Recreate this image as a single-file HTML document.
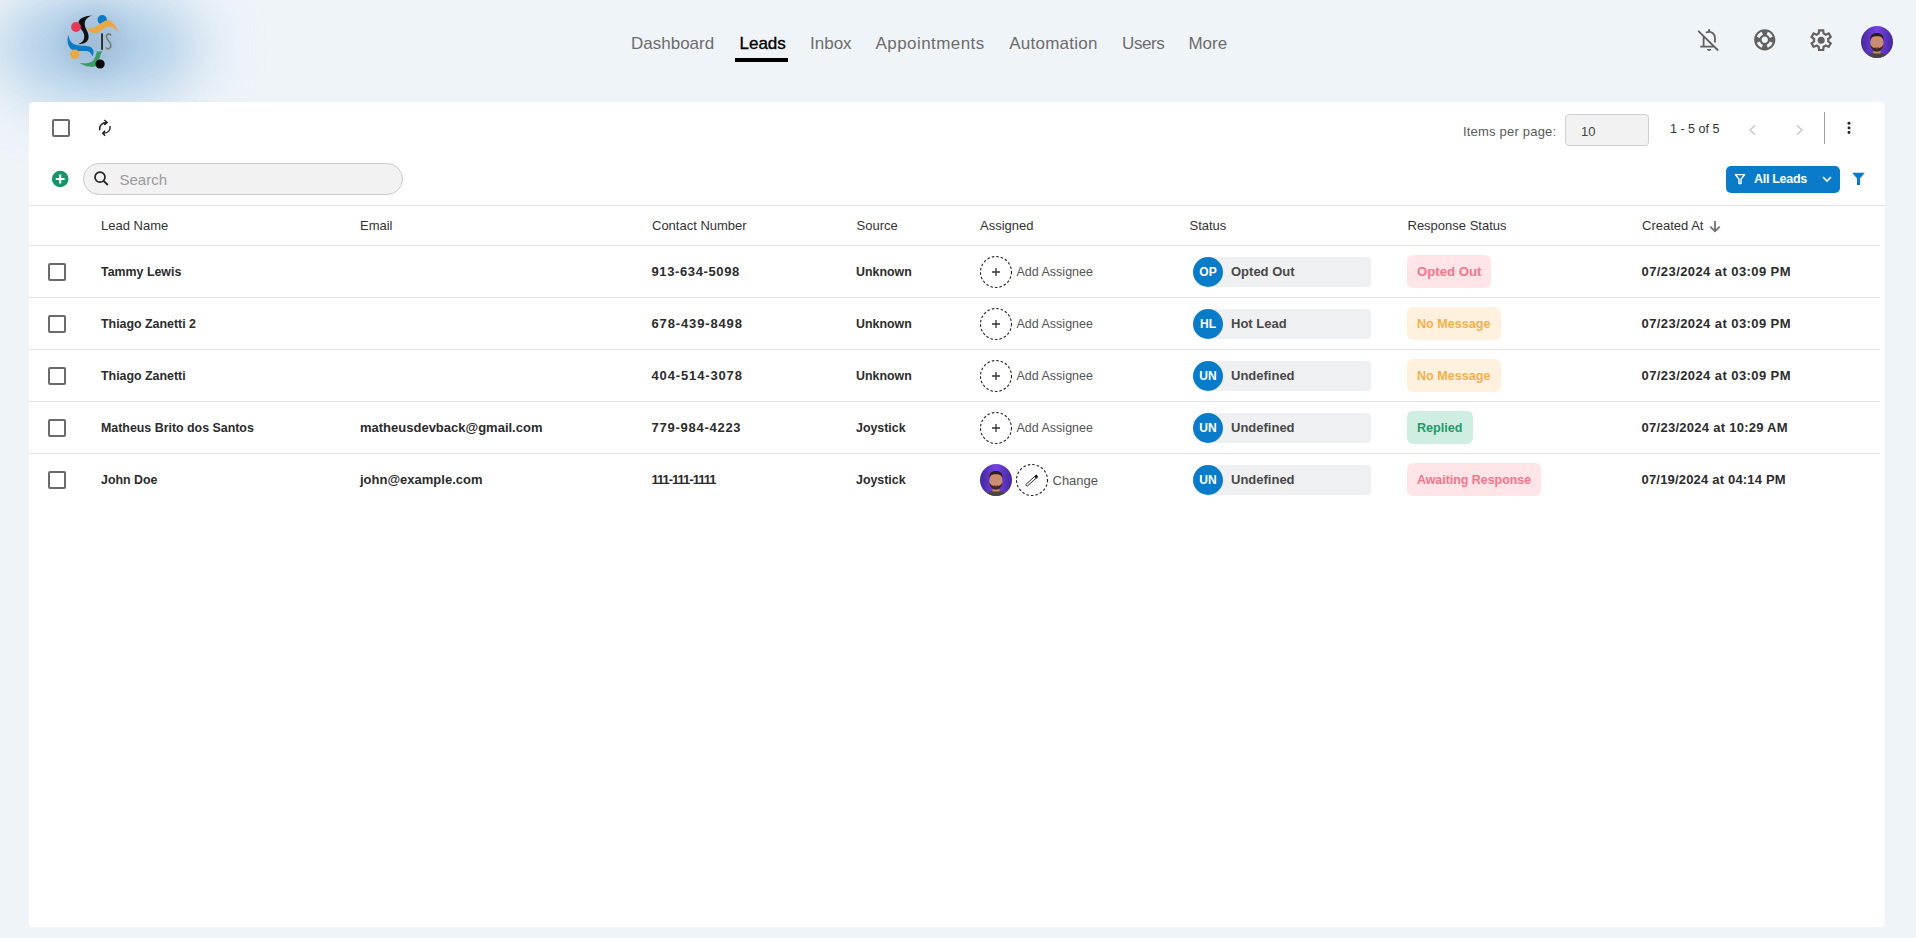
<!DOCTYPE html>
<html><head><meta charset="utf-8">
<style>
*{box-sizing:border-box;margin:0;padding:0}
html,body{width:1916px;height:938px;overflow:hidden}
body{background:#eff4f9;font-family:"Liberation Sans",sans-serif;position:relative;color:#222}
.a{position:absolute;white-space:nowrap}
.glow{position:absolute;left:-4px;top:-8px;width:204px;height:110px;border-radius:50%;background:#abcce7;filter:blur(30px)}
.nav{font-size:17px;line-height:17px;color:#6c6c6c;top:34.6px}
.card{position:absolute;left:29px;top:102px;width:1856px;height:825px;background:#fff;border-radius:4px}
.cb{position:absolute;width:18px;height:18px;border:2px solid #6b6b6b;border-radius:2px}
.hline{position:absolute;height:1px;background:#e2e2e2}
.th{font-size:13px;line-height:13px;color:#333;top:219px}
.td{font-size:13px;line-height:13px;color:#2c2c2c;font-weight:bold}
.dash{position:absolute;width:32px;height:32px;border:1px dashed #333;border-radius:50%}
.stbar{position:absolute;left:1208px;width:163px;height:30px;background:#eff0f2;border-radius:4px}
.stc{position:absolute;left:1193px;width:30px;height:30px;border-radius:50%;background:#0a7bc8;color:#fff;font-weight:bold;font-size:12px;line-height:30px;text-align:center}
.stt{font-size:13px;line-height:13px;color:#484848;font-weight:bold;left:1231px}
.rs{position:absolute;left:1407px;height:33px;border-radius:6px;font-weight:bold;font-size:12.6px;line-height:33px;padding:0 10px}
</style></head><body>
<div class="glow"></div>
<div class="a" style="left:62px;top:12px;width:62px;height:60px;border-radius:50%;background:#9db9d3;opacity:0.75;filter:blur(12px)"></div>

<!-- logo -->
<svg class="a" style="left:55px;top:5px" width="80" height="70" viewBox="55 5 80 70">
 <path d="M92.3 15.4 C86 15.6 80 17.5 78.6 21.5 C78 25 80.5 28.5 82.8 31.5 C84.6 34.2 84.8 38 83.2 40.6 C82 42.4 80 43.6 78.1 44.2 C82.8 44.4 87.5 42.6 88.4 38.8 C89.2 35.2 87.6 31.8 86.1 29 C84.6 26 84.2 22.5 85.6 20 C87 17.6 89.5 16 92.3 15.4 Z" fill="#111"/>
 <circle cx="76" cy="27" r="4.9" fill="#e8395a"/>
 <circle cx="102.2" cy="19.7" r="4.7" fill="#0a7bc8"/>
 <path d="M87 28.2 C90 32 94 35 99 32 C102.5 30 105.5 26.5 109.5 26.5 C113 26.8 116 29.5 118.4 32.2 C116.5 27.5 113.5 21.5 109 20.3 C105 19.6 101.5 23 97.5 25.5 C94 27.8 90.5 28.8 87 28.2 Z" fill="#e9a843"/>
 <path d="M68.4 34.6 C66.8 40 67.2 46 71.5 49.5 C76 52.5 84 50 88.5 51.5 C91 52.5 92 54.5 92 56.6 C94.5 53.5 94 49 90.5 47 C86.5 45 78.5 46.5 73.5 44 C70.3 42.3 68.8 38.5 68.4 34.6 Z" fill="#0a7bc8"/>
 <circle cx="74.8" cy="54.3" r="4.8" fill="#e9a843"/>
 <path d="M102.2 51.2 L96.8 51.6 C95.8 55.5 95.2 58.5 93 60.8 C90 63.6 84.5 63.6 79.6 63 C84 66.2 90.5 67.8 95.5 66.3 C98.5 62.5 99.8 56 102.2 51.2 Z" fill="#3e9a66"/>
 <circle cx="100.1" cy="64" r="4.6" fill="#0b0b0b"/>
 <rect x="101.2" y="33.4" width="1.7" height="16.4" fill="#1a1a1a"/>
 <path d="M110.9 35.6 C110.6 33.6 106.4 33.4 106.4 36.6 C106.4 40.6 110.9 41 110.9 45.6 C110.9 49.2 106.5 49.6 106.1 47.3" fill="none" stroke="#7a7a7a" stroke-width="1.6"/>
</svg>

<!-- nav -->
<span class="a nav" style="left:631px">Dashboard</span>
<span class="a nav" style="left:739.5px;color:#000;-webkit-text-stroke:0.35px #000">Leads</span>
<div class="a" style="left:735px;top:58px;width:53px;height:4px;background:#000"></div>
<span class="a nav" style="left:810px">Inbox</span>
<span class="a nav" style="left:875.6px;letter-spacing:0.42px">Appointments</span>
<span class="a nav" style="left:1009.2px;letter-spacing:0.25px">Automation</span>
<span class="a nav" style="left:1122px;letter-spacing:-0.4px">Users</span>
<span class="a nav" style="left:1188.4px">More</span>

<!-- header icons -->
<svg class="a" style="left:1696px;top:28px" width="24" height="24" viewBox="0 0 24 24">
 <path d="M7.6 18.5 V8.6 M9.9 4.8 C10.8 4.1 11.9 3.8 13.1 3.8 C16.3 3.8 18.9 6.4 18.9 9.6 V14.6 M4.3 18.6 H17.6 M2.2 2.8 L22.2 22.5" fill="none" stroke="#616161" stroke-width="1.8"/>
 <path d="M12.1 1.2 H14.1 V4.2 H12.1 Z" fill="#616161"/>
 <path d="M11 20.9 H15.2 C15.2 22.1 14.3 22.9 13.1 22.9 C11.9 22.9 11 22.1 11 20.9 Z" fill="#616161"/>
</svg>
<svg class="a" style="left:1752.3px;top:27.1px" width="25.5" height="25.5" viewBox="0 0 24 24">
 <path d="M12 2C6.48 2 2 6.48 2 12s4.48 10 10 10 10-4.48 10-10S17.52 2 12 2zm7.46 7.12l-2.78 1.15c-.51-1.36-1.58-2.44-2.95-2.94l1.15-2.78c2.1.8 3.77 2.47 4.58 4.57zM12 15c-1.66 0-3-1.34-3-3s1.34-3 3-3 3 1.34 3 3-1.340 3-3 3zM9.13 4.54l1.17 2.78c-1.38.5-2.47 1.59-2.98 2.97L4.54 9.13c.81-2.110 2.48-3.78 4.59-4.59zM4.54 14.87l2.78-1.15c.51 1.38 1.59 2.46 2.97 2.96l-1.17 2.78c-2.1-.81-3.77-2.48-4.58-4.59zm10.34 4.59l-1.15-2.78c1.37-.51 2.45-1.59 2.95-2.97l2.78 1.17c-.81 2.1-2.48 3.77-4.58 4.58z" fill="#616161"/>
</svg>
<svg class="a" style="left:1808px;top:26.8px" width="26.3" height="26.3" viewBox="0 -960 960 960">
 <path d="m370-80-16-128q-13-5-24.5-12T307-235l-119 50L78-375l103-78q-1-7-1-13.5v-27q0-6.5 1-13.5L78-585l110-190 119 50q11-8 23-15t24-12l16-128h220l16 128q13 5 24.5 12t22.5 15l119-50 110 190-103 78q1 7 1 13.5v27q0 6.5-2 13.5l103 78-110 190-118-50q-11 8-23 15t-24 12L590-80H370Zm70-80h79l14-106q31-8 57.5-23.5T639-327l99 41 39-68-86-65q5-14 7-29.5t2-31.5q0-16-2-31.5t-7-29.5l86-65-39-68-99 42q-22-23-48.5-38.5T533-694l-13-106h-79l-14 106q-31 8-57.5 23.5T321-633l-99-41-39 68 86 64q-5 15-7 30t-2 32q0 16 2 31t7 30l-86 65 39 68 99-42q22 23 48.5 38.5T427-266l13 106Z" fill="#616161"/>
 <circle cx="480" cy="-480" r="128" fill="#616161"/>
</svg>
<svg width="0" height="0" style="position:absolute"><defs><symbol id="avatar" viewBox="0 0 32 32">
 <defs>
  <linearGradient id="pg" x1="0" y1="0" x2="1" y2="0"><stop offset="0" stop-color="#46279a"/><stop offset="0.5" stop-color="#7443e6"/><stop offset="1" stop-color="#46279a"/></linearGradient>
  <clipPath id="cc"><circle cx="16" cy="16" r="16"/></clipPath>
 </defs>
 <g clip-path="url(#cc)">
  <rect width="32" height="32" fill="url(#pg)"/>
  <ellipse cx="16" cy="33" rx="12.5" ry="6.5" fill="#4b4442"/>
  <path d="M12.5 24 h7 v3.5 h-7z" fill="#c88a68"/>
  <ellipse cx="15.9" cy="17" rx="6.6" ry="8.3" fill="#d08c6c"/>
  <path d="M9.3 14.5 C8.8 9 11.5 6.9 15.9 6.9 C20.3 6.9 23 9 22.5 14.5 C21.8 11.5 20.5 10.3 15.9 10.3 C11.3 10.3 10 11.5 9.3 14.5 Z" fill="#2a201c"/>
  <path d="M9.5 18 C9.7 23.5 12.5 25.6 15.9 25.6 C19.3 25.6 22.1 23.5 22.3 18 C21.3 21 19.5 22.2 15.9 22.2 C12.3 22.2 10.5 21 9.5 18 Z" fill="#3a2a22"/>
  <rect x="10.4" y="15.3" width="4.6" height="2.6" rx="0.8" fill="none" stroke="#b09a94" stroke-width="0.6"/>
  <rect x="16.8" y="15.3" width="4.6" height="2.6" rx="0.8" fill="none" stroke="#b09a94" stroke-width="0.6"/>
  <path d="M13.8 21.3 Q15.9 22.6 18 21.3" stroke="#a84a42" stroke-width="0.9" fill="none"/>
 </g>
</symbol></defs></svg>
<svg class="a" style="left:1861px;top:25.6px" width="32" height="32" viewBox="0 0 32 32"><use href="#avatar"/></svg>

<!-- card -->
<div class="card"></div>

<!-- toolbar row 1 -->
<div class="cb" style="left:52px;top:119px"></div>
<svg class="a" style="left:94px;top:116px" width="22" height="24" viewBox="0 0 22 24">
 <path d="M5.6 14.2 C5.2 9.5 8 6.4 13 6.4 M10.3 4 L13.2 6.4 L10.3 8.9 M16.1 10 C16.6 14.6 14 17.3 9.2 17.3 M11.1 14.8 L8.7 17.3 L11.1 19.7" fill="none" stroke="#222" stroke-width="1.45"/>
</svg>
<span class="a" style="left:1463px;top:125px;font-size:13px;line-height:13px;color:#5a5a5a;letter-spacing:0.2px">Items per page:</span>
<div class="a" style="left:1565px;top:114px;width:84px;height:32px;background:#f2f2f2;border:1px solid #cfcfcf;border-radius:4px"></div>
<span class="a" style="left:1581px;top:125px;font-size:13px;line-height:13px;color:#444">10</span>
<span class="a" style="left:1670px;top:123.4px;font-size:12.5px;line-height:12.5px;color:#333">1 - 5 of 5</span>
<svg class="a" style="left:1746px;top:124px" width="12" height="12" viewBox="0 0 12 12"><path d="M9 1.3 L4 6 L9 10.7" fill="none" stroke="#c9c9c9" stroke-width="1.5"/></svg>
<svg class="a" style="left:1794px;top:124px" width="12" height="12" viewBox="0 0 12 12"><path d="M3 1.3 L8 6 L3 10.7" fill="none" stroke="#c9c9c9" stroke-width="1.5"/></svg>
<div class="a" style="left:1824px;top:112px;width:1px;height:32px;background:#9e9e9e"></div>
<svg class="a" style="left:1843px;top:118px" width="12" height="20" viewBox="0 0 12 20">
 <circle cx="6" cy="5.3" r="1.45" fill="#222"/><circle cx="6" cy="9.9" r="1.45" fill="#222"/><circle cx="6" cy="14.5" r="1.45" fill="#222"/>
</svg>

<!-- toolbar row 2 -->
<svg class="a" style="left:51px;top:170px" width="18" height="18" viewBox="0 0 18 18">
 <circle cx="9.2" cy="9" r="8.3" fill="#16956a"/>
 <path d="M9.2 4.6 V13.4 M4.8 9 H13.6" stroke="#fff" stroke-width="2"/>
</svg>
<div class="a" style="left:83px;top:163px;width:320px;height:32px;background:#f2f2f2;border:1px solid #cbcbcb;border-radius:16px"></div>
<svg class="a" style="left:92px;top:169px" width="20" height="20" viewBox="0 0 20 20">
 <circle cx="8" cy="8.2" r="5" fill="none" stroke="#222" stroke-width="1.7"/>
 <path d="M11.6 11.8 L15.8 16" stroke="#222" stroke-width="1.8"/>
</svg>
<span class="a" style="left:119.5px;top:171.5px;font-size:15px;line-height:15px;color:#9a9a9a">Search</span>

<div class="a" style="left:1726px;top:166px;width:114px;height:27px;background:#0a7bc8;border-radius:5px"></div>
<svg class="a" style="left:1734px;top:173px" width="12" height="12" viewBox="0 0 12 12">
 <path d="M1.4 1.6 H10.6 L7 6.2 V10.6 H5 V6.2 Z" fill="none" stroke="#fff" stroke-width="1.4" stroke-linejoin="round"/>
</svg>
<span class="a" style="left:1754px;top:173px;font-size:12.5px;line-height:12.5px;color:#fff;font-weight:bold;letter-spacing:-0.3px">All Leads</span>
<svg class="a" style="left:1821px;top:174px" width="12" height="10" viewBox="0 0 12 10"><path d="M2 3 L6 7 L10 3" fill="none" stroke="#fff" stroke-width="1.6"/></svg>
<svg class="a" style="left:1851px;top:172px" width="15" height="14" viewBox="0 0 15 14">
 <path d="M1.2 0.7 H13.8 L9 6.5 V13 H6 V6.5 Z" fill="#0a7bc8"/>
</svg>

<div class="hline" style="left:29px;top:205px;width:1856px"></div>

<!-- table header -->
<span class="a th" style="left:101px">Lead Name</span>
<span class="a th" style="left:360px">Email</span>
<span class="a th" style="left:652px">Contact Number</span>
<span class="a th" style="left:856.5px">Source</span>
<span class="a th" style="left:980px">Assigned</span>
<span class="a th" style="left:1189.5px">Status</span>
<span class="a th" style="left:1407.5px">Response Status</span>
<span class="a th" style="left:1642px">Created At</span>
<svg class="a" style="left:1708px;top:218px" width="14" height="16" viewBox="0 0 14 16"><path d="M7 3 V13 M2.3 8.6 L7 13.3 L11.7 8.6" fill="none" stroke="#707070" stroke-width="1.8"/></svg>
<div class="hline" style="left:29px;top:245px;width:1851px"></div>

<div id="rows"></div>
<!-- row 1 -->
<div class="cb" style="left:48px;top:262.5px"></div>
<span class="a td" style="left:101px;top:265.7px;font-size:12.4px">Tammy Lewis</span>
<span class="a td" style="left:651.5px;top:265.0px;letter-spacing:0.62px">913-634-5098</span>
<span class="a td" style="left:856px;top:265.7px;font-size:12.4px">Unknown</span>
<svg class="a" style="left:980px;top:255.5px" width="32" height="32" viewBox="0 0 32 32"><circle cx="16" cy="16" r="15.5" fill="none" stroke="#222" stroke-width="1.1" stroke-dasharray="2.5 2.05"/></svg>
<svg class="a" style="left:990px;top:265.5px" width="12" height="12" viewBox="0 0 12 12"><path d="M6 2 V10 M2 6 H10" stroke="#333" stroke-width="1.3"/></svg>
<span class="a" style="left:1016.5px;top:266.0px;font-size:12.5px;line-height:13px;color:#555">Add Assignee</span>
<div class="stbar" style="top:256.5px"></div>
<div class="stc" style="top:256.5px">OP</div>
<span class="a stt" style="top:265.0px">Opted Out</span>
<div class="rs" style="top:255.0px;padding-top:1px;line-height:32px;background:#ffe4e8;color:#f5758a;font-size:13.2px">Opted Out</div>
<span class="a td" style="left:1641.5px;top:265.0px;letter-spacing:0.42px">07/23/2024 at 03:09 PM</span>
<div class="hline" style="left:29px;top:297px;width:1851px"></div>
<!-- row 2 -->
<div class="cb" style="left:48px;top:314.5px"></div>
<span class="a td" style="left:101px;top:317.7px;font-size:12.4px">Thiago Zanetti 2</span>
<span class="a td" style="left:651.5px;top:317.0px;letter-spacing:0.86px">678-439-8498</span>
<span class="a td" style="left:856px;top:317.7px;font-size:12.4px">Unknown</span>
<svg class="a" style="left:980px;top:307.5px" width="32" height="32" viewBox="0 0 32 32"><circle cx="16" cy="16" r="15.5" fill="none" stroke="#222" stroke-width="1.1" stroke-dasharray="2.5 2.05"/></svg>
<svg class="a" style="left:990px;top:317.5px" width="12" height="12" viewBox="0 0 12 12"><path d="M6 2 V10 M2 6 H10" stroke="#333" stroke-width="1.3"/></svg>
<span class="a" style="left:1016.5px;top:318.0px;font-size:12.5px;line-height:13px;color:#555">Add Assignee</span>
<div class="stbar" style="top:308.5px"></div>
<div class="stc" style="top:308.5px">HL</div>
<span class="a stt" style="top:317.0px">Hot Lead</span>
<div class="rs" style="top:307.0px;padding-top:1px;line-height:32px;background:#fff1de;color:#f1b04e;font-size:12.6px">No Message</div>
<span class="a td" style="left:1641.5px;top:317.0px;letter-spacing:0.42px">07/23/2024 at 03:09 PM</span>
<div class="hline" style="left:29px;top:349px;width:1851px"></div>
<!-- row 3 -->
<div class="cb" style="left:48px;top:366.5px"></div>
<span class="a td" style="left:101px;top:369.7px;font-size:12.4px">Thiago Zanetti</span>
<span class="a td" style="left:651.5px;top:369.0px;letter-spacing:0.86px">404-514-3078</span>
<span class="a td" style="left:856px;top:369.7px;font-size:12.4px">Unknown</span>
<svg class="a" style="left:980px;top:359.5px" width="32" height="32" viewBox="0 0 32 32"><circle cx="16" cy="16" r="15.5" fill="none" stroke="#222" stroke-width="1.1" stroke-dasharray="2.5 2.05"/></svg>
<svg class="a" style="left:990px;top:369.5px" width="12" height="12" viewBox="0 0 12 12"><path d="M6 2 V10 M2 6 H10" stroke="#333" stroke-width="1.3"/></svg>
<span class="a" style="left:1016.5px;top:370.0px;font-size:12.5px;line-height:13px;color:#555">Add Assignee</span>
<div class="stbar" style="top:360.5px"></div>
<div class="stc" style="top:360.5px">UN</div>
<span class="a stt" style="top:369.0px">Undefined</span>
<div class="rs" style="top:359.0px;padding-top:1px;line-height:32px;background:#fff1de;color:#f1b04e;font-size:12.6px">No Message</div>
<span class="a td" style="left:1641.5px;top:369.0px;letter-spacing:0.42px">07/23/2024 at 03:09 PM</span>
<div class="hline" style="left:29px;top:401px;width:1851px"></div>
<!-- row 4 -->
<div class="cb" style="left:48px;top:418.5px"></div>
<span class="a td" style="left:101px;top:421.7px;font-size:12.4px">Matheus Brito dos Santos</span>
<span class="a td" style="left:360px;top:421.0px">matheusdevback@gmail.com</span>
<span class="a td" style="left:651.5px;top:421.0px;letter-spacing:0.74px">779-984-4223</span>
<span class="a td" style="left:856px;top:421.7px;font-size:12.4px">Joystick</span>
<svg class="a" style="left:980px;top:411.5px" width="32" height="32" viewBox="0 0 32 32"><circle cx="16" cy="16" r="15.5" fill="none" stroke="#222" stroke-width="1.1" stroke-dasharray="2.5 2.05"/></svg>
<svg class="a" style="left:990px;top:421.5px" width="12" height="12" viewBox="0 0 12 12"><path d="M6 2 V10 M2 6 H10" stroke="#333" stroke-width="1.3"/></svg>
<span class="a" style="left:1016.5px;top:422.0px;font-size:12.5px;line-height:13px;color:#555">Add Assignee</span>
<div class="stbar" style="top:412.5px"></div>
<div class="stc" style="top:412.5px">UN</div>
<span class="a stt" style="top:421.0px">Undefined</span>
<div class="rs" style="top:411.0px;padding-top:1px;line-height:32px;background:#cfeee2;color:#1f9a68;font-size:12.6px">Replied</div>
<span class="a td" style="left:1641.5px;top:421.0px;letter-spacing:0.27px">07/23/2024 at 10:29 AM</span>
<div class="hline" style="left:29px;top:453px;width:1851px"></div>
<!-- row 5 -->
<div class="cb" style="left:48px;top:470.5px"></div>
<span class="a td" style="left:101px;top:473.7px;font-size:12.4px">John Doe</span>
<span class="a td" style="left:360px;top:473.0px">john@example.com</span>
<span class="a td" style="left:651.5px;top:473.0px;letter-spacing:-1.0px">111-111-1111</span>
<span class="a td" style="left:856px;top:473.7px;font-size:12.4px">Joystick</span>
<svg class="a" style="left:980px;top:463.5px" width="32" height="32" viewBox="0 0 32 32"><use href="#avatar"/></svg>
<svg class="a" style="left:1016px;top:463.5px" width="32" height="32" viewBox="0 0 32 32"><circle cx="16" cy="16" r="15.5" fill="none" stroke="#222" stroke-width="1.1" stroke-dasharray="2.5 2.05"/></svg>
<svg class="a" style="left:1024px;top:471.5px" width="16" height="16" viewBox="0 0 16 16"><path d="M1.66 12.68 L12.26 3.08 L13.74 4.72 L3.14 14.32 Z" fill="none" stroke="#1a1a1a" stroke-width="0.9" stroke-linejoin="round"/><path d="M10.63 4.55 L12.26 3.08 L13.74 4.72 L12.1 6.19 Z" fill="#111" stroke="#111" stroke-width="0.6"/></svg>
<span class="a" style="left:1052.5px;top:473.7px;font-size:13px;line-height:13px;color:#555">Change</span>
<div class="stbar" style="top:464.5px"></div>
<div class="stc" style="top:464.5px">UN</div>
<span class="a stt" style="top:473.0px">Undefined</span>
<div class="rs" style="top:463.0px;padding-top:1px;line-height:32px;background:#ffe4e8;color:#f5758a;font-size:12.4px">Awaiting Response</div>
<span class="a td" style="left:1641.5px;top:473.0px;letter-spacing:0.19px">07/19/2024 at 04:14 PM</span>
</body></html>
